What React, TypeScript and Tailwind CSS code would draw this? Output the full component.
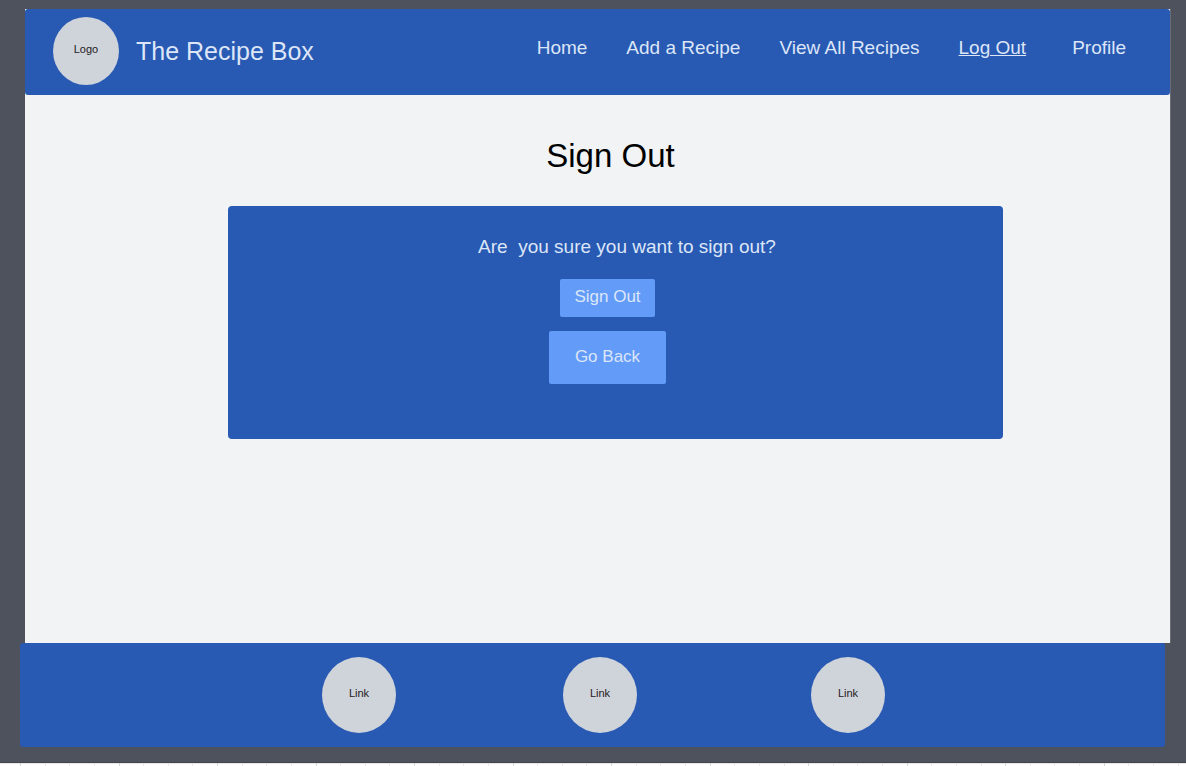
import React from "react";

const navLinks = [
  { label: "Home", current: false },
  { label: "Add a Recipe", current: false },
  { label: "View All Recipes", current: false },
  { label: "Log Out", current: true },
];

const footerLinks = ["first", "second", "third"];

function Header() {
  return (
    <header className="flex items-center justify-between rounded-[3px] bg-[#2859b3] pt-2 pr-11 pb-[10px] pl-7 text-[#dce6f7]">
      <a href="#home" className="flex items-center gap-[17px]">
        <span className="flex h-[68px] w-[66px] items-center justify-center rounded-[50%] bg-[#cfd3da] pb-[3px] text-[11px] text-[#1f2023]">
          Logo
        </span>
        <span className="text-[25px] leading-8">The Recipe Box</span>
      </a>
      <nav className="flex items-center gap-[46px] pb-[6px] text-[19px] leading-6">
        <ul className="flex items-center gap-[39px]">
          {navLinks.map((link) => (
            <li key={link.label}>
              <a
                href="#nav"
                className={link.current ? "underline decoration-1 underline-offset-1" : "no-underline"}
              >
                {link.label}
              </a>
            </li>
          ))}
        </ul>
        <a href="#profile">Profile</a>
      </nav>
    </header>
  );
}

function SignOutPanel() {
  return (
    <main className="flex flex-1 flex-col gap-[30px] pt-[41px] pr-[167px] pb-10 pl-[203px]">
      <h1 className="pr-[10px] text-center text-[33px] leading-10 text-black">Sign Out</h1>
      <section className="flex flex-col gap-5 rounded-[4px] bg-[#2859b3] pt-[29px] pb-[55px] text-[#dce6f7]">
        <p className="pl-[23px] text-center text-[19px] leading-6 whitespace-pre-wrap">
          {"Are  you sure you want to sign out?"}
        </p>
        <div className="flex flex-col items-center gap-[14px] pr-4 text-[17px] leading-5">
          <button type="button" className="rounded-[2px] bg-[#629bf8] px-[14px] pt-2 pb-[10px]">
            Sign Out
          </button>
          <button type="button" className="rounded-[2px] bg-[#629bf8] px-[26px] pt-4 pb-[17px]">
            Go Back
          </button>
        </div>
      </section>
    </main>
  );
}

function Footer() {
  return (
    <footer className="mr-[21px] mb-[15px] ml-5 grid grid-cols-[241px_248px_74px] justify-center rounded-[3px] bg-[#2859b3] py-[14px] pl-[22px]">
      {footerLinks.map((id) => (
        <a
          key={id}
          href="#link"
          className="flex h-[76px] w-[74px] items-center justify-center rounded-[50%] bg-[#cfd3da] pb-[3px] text-[11px] text-[#1f2023]"
        >
          Link
        </a>
      ))}
    </footer>
  );
}

function Ruler() {
  const ticks = Array.from({ length: 120 }, (_, i) => i);
  return (
    <div className="h-1 overflow-hidden border-t border-[#42454f] bg-white">
      <svg className="block h-[3px] w-full" aria-hidden="true" shapeRendering="crispEdges">
        <rect width="100%" height="1" fill="#e6e6e8" />
        {ticks.map((i) => (
          <rect
            key={i}
            x={Math.round(20 + i * 24.63)}
            y="0"
            width="1"
            height="3"
            fill={i % 4 === 0 ? "#d4d5d8" : "#e8e8ea"}
          />
        ))}
      </svg>
    </div>
  );
}

export default function App() {
  return (
    <div className="flex min-h-screen flex-col bg-[#4e525d] pt-[9px] font-['Liberation_Sans',Arial,sans-serif]">
      <div className="mr-[15px] ml-[25px] flex flex-1 flex-col border-r border-[#686c76] bg-[#f1f3f5]">
        <Header />
        <SignOutPanel />
      </div>
      <Footer />
      <Ruler />
    </div>
  );
}
